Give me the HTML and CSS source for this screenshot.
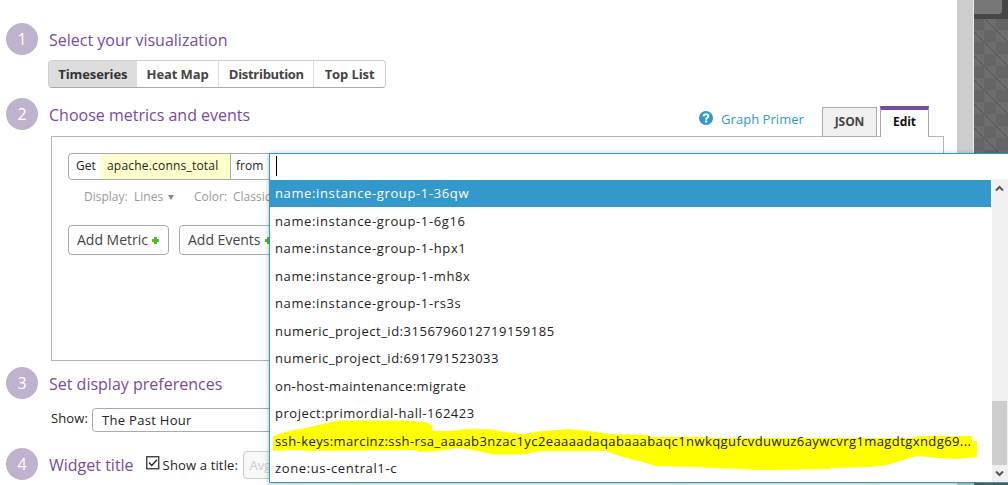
FILE: index.html
```html
<!DOCTYPE html>
<html lang="en">
<head>
<meta charset="utf-8">
<title>Graph editor</title>
<link rel="stylesheet" href="styles.css">
</head>
<body>
<div class="screen">
  <main class="panel">
    <section class="step step-visualization">
      <div class="step-head"><span class="num">1</span><h2>Select your visualization</h2></div>
      <div class="segments">
        <span class="segment active">Timeseries</span>
        <span class="segment heat">Heat Map</span>
        <span class="segment dist">Distribution</span>
        <span class="segment top">Top List</span>
      </div>
    </section>
    <section class="step step-metrics">
      <div class="step-head">
        <span class="num">2</span><h2>Choose metrics and events</h2>
        <div class="head-tools">
          <a class="primer"><svg width="14" height="14" viewBox="0 0 14 14"><circle cx="7" cy="7" r="7" fill="#3399cc"/><path d="M4.6 5.400C4.700 3.900 5.700 3.300 7 3.300c1.400 0 2.300.8 2.300 1.900C9.300 6.800 7.200 6.700 7.100 8.600" fill="none" stroke="#fff" stroke-width="2"/><rect x="6" y="9.500" width="2.200" height="2" fill="#fff"/></svg><span>Graph Primer</span></a>
          <span class="tab json">JSON</span><span class="tab edit">Edit</span>
        </div>
      </div>
      <div class="editor">
        <div class="query"><span class="get">Get</span><span class="metric">apache.conns_total</span><span class="from">from</span></div>
        <div class="options"><span class="opt-display">Display:</span><span class="opt-lines">Lines</span><i class="caret"></i><span class="opt-color">Color:</span><span>Classic</span></div>
        <div class="adders">
          <span class="adder">Add Metric<i class="plus"></i></span>
          <span class="adder">Add Events<i class="plus"></i></span>
        </div>
      </div>
    </section>
    <section class="step step-display">
      <div class="step-head"><span class="num">3</span><h2>Set display preferences</h2></div>
      <div class="show-row"><span class="show-label">Show:</span><span class="select">The Past Hour</span></div>
    </section>
    <section class="step step-title">
      <div class="step-head"><span class="num">4</span><h2>Widget title</h2>
        <svg class="check" width="14" height="14" viewBox="0 0 14 14"><rect x=".75" y=".75" width="12" height="12" fill="#fff" stroke="#333" stroke-width="1.3"/><path d="M3 6.500l2.700 3L11 3.700" fill="none" stroke="#222" stroke-width="1.300"/></svg>
        <span class="title-label">Show a title:</span><span class="title-input">Avg</span>
      </div>
    </section>
  </main>
  <div class="page-scroll"></div>
  <aside class="backdrop">
    <svg width="34" height="485">
      <defs><pattern id="weave" x="-2" y="6" width="24" height="24" patternUnits="userSpaceOnUse">
        <rect width="24" height="24" fill="#6d6d6d"/><path d="M12 0h12v12H12zM0 12h12v12H0z" fill="#656565"/>
        <path d="M2 2L24 24M0 0L2 2" stroke="#434343" stroke-dasharray="1 .7"/>
      </pattern></defs>
      <rect width="34" height="485" fill="url(#weave)"/>
      <rect width="34" height="19" fill="#474747"/><path d="M0 0h28v12l-2 2H0z" fill="#777"/>
    </svg>
  </aside>
</div>
<div class="dropdown">
  <div class="search"><i class="cursor"></i></div>
  <div class="results">
    <ul class="list">
      <li class="selected">name:instance-group-1-36qw</li>
      <li>name:instance-group-1-6g16</li>
      <li>name:instance-group-1-hpx1</li>
      <li>name:instance-group-1-mh8x</li>
      <li>name:instance-group-1-rs3s</li>
      <li class="medium">numeric_project_id:3156796012719159185</li>
      <li class="medium">numeric_project_id:691791523033</li>
      <li class="tight">on-host-maintenance:migrate</li>
      <li class="medium">project:primordial-hall-162423</li>
      <li class="tight">ssh-keys:marcinz:ssh-rsa_aaaab3nzac1yc2eaaaadaqabaaabaqc1nwkqgufcvduwuz6aywcvrg1magdtgxndg69...</li>
      <li>zone:us-central1-c</li>
    </ul>
    <div class="scrollbar">
      <svg width="16" height="303" viewBox="0 0 16 303"><rect width="16" height="303" fill="#f0f0f0"/><rect y="222" width="15" height="64" fill="#cdcdcd"/><path d="M4 11.500l3.500-3.500 3.500 3.500M4 292.500l3.500 3.500 3.500-3.500" fill="none" stroke="#555" stroke-width="2"/></svg>
    </div>
  </div>
  <svg class="marker" width="738" height="329" viewBox="270 154 738 329"><path fill="#ff0" d="M273 436L285 432L310 427L338 420.500L403 420.500L425 422L432 425L432 431L450 431L467 429L487 429L507 432L523 434L543 431L570 429L588 431L610 434L648 435L650 437L698 437L720 438L910 438L920 436L972 436L972 441L977 441L977 457L957 459L940 458L917 456L903 460L887 465L870 467L832 468L830 469L758 470L740 469L713 468L693 467L655 466L643 462L630 459L613 454L607 451L540 451L523 454.500L493 454.500L473 450L458 448L437 451L418 452L417 450L310 451L290 450L273 451Z"/></svg>
</div>
</body>
</html>
```
FILE: styles.css
```css
* { box-sizing: border-box; }
body { margin: 0; overflow: hidden; background: #fff; font-family: "Open Sans", "Noto Sans", sans-serif; font-size: 13px; color: #222; }
.screen { display: flex; width: 1008px; height: 485px; overflow: hidden; }
.panel { width: 957px; flex: none; padding-top: 23px; }
.page-scroll { width: 17px; background: #cdcdcd; border-right: 1px solid #eee; }
.backdrop { width: 34px; flex: none; }
.backdrop svg, .scrollbar svg { display: block; }

.step { padding-left: 6px; }
.step-head { display: flex; height: 32px; position: relative; white-space: nowrap; }
.num { width: 32px; height: 32px; border-radius: 50%; background: #bfb2cc; color: #fff; font-size: 16px; line-height: 33px; text-align: center; }
h2 { margin: 0 0 0 11px; font-size: 16px; font-weight: 400; line-height: 34px; color: #774aa4; }
.step-visualization { height: 75px; }
.step-metrics { height: 269px; }
.step-display { height: 81px; }

.segments { display: flex; width: 338px; height: 28px; margin: 5px 0 0 42px; border: 1px solid #d0d0d0; border-bottom-color: #aaa; border-radius: 4px; overflow: hidden; font-weight: 700; color: #444; line-height: 27px; text-align: center; }
.segment { width: 71px; letter-spacing: -.1px; }
.segment.active { width: 88px; background: #ddd; color: #333; }
.segment.heat { width: 83px; border-right: 1px solid #ddd; }
.segment.dist { width: 95px; border-right: 1px solid #ddd; letter-spacing: -.3px; }

.head-tools { display: flex; margin-left: auto; padding-top: 8px; height: 40px; }
.primer { display: flex; gap: 8px; margin-right: 18px; padding-top: 5px; color: #3399cc; line-height: 17px; letter-spacing: .05px; }
.tab { font-weight: 700; text-align: center; font-size: 12px; letter-spacing: -.1px; }
.json { width: 55px; height: 30px; margin: 1px 3px 0 0; border: 1px solid #aaa; background: #f0f0f0; color: #444; line-height: 28px; }
.edit { width: 49px; height: 31px; margin-right: 28px; border: 1px solid #aaa; border-top: 4px solid #774aa4; border-bottom: 0; background: #fff; color: #111; line-height: 24px; z-index: 1; }
.editor { width: 893px; height: 225px; margin: 6px 0 0 45px; padding: 16px; border: 1px solid #b5b5b5; }
.query { display: flex; width: 260px; height: 27px; border: 1px solid #aaa; border-radius: 4px 0 0 4px; font-size: 12px; line-height: 24px; white-space: nowrap; overflow: hidden; }
.get { width: 32px; padding-left: 7px; }
.metric { width: 130px; padding-left: 6px; background: #ffffcc; border-right: 1px solid #aaa; letter-spacing: .2px; }
.from { padding-left: 5px; }
.options { display: flex; height: 18px; margin: 8px 0 0 16px; color: #999; font-size: 12px; line-height: 18px; white-space: nowrap; }
.opt-display { width: 50px; }
.opt-lines { width: 34px; }
.caret { width: 6px; height: 5px; margin: 7px 20px 0 0; background: #888; clip-path: polygon(0 0, 100% 0, 50% 100%); }
.opt-color { width: 39px; }
.adders { display: flex; gap: 10px; margin-top: 19px; }
.adder { display: flex; width: 101px; height: 30px; padding-left: 8px; border: 1px solid #aaa; border-radius: 4px; font-size: 14px; line-height: 28px; color: #444; white-space: nowrap; }
.plus { width: 7px; height: 7px; margin: 11px 0 0 4px; background: linear-gradient(#5b2, #5b2) center / 3px 7px no-repeat, linear-gradient(#5b2, #5b2) center / 7px 3px no-repeat; }

.show-row { display: flex; height: 24px; margin: 9px 0 0 45px; }
.show-label { width: 41px; line-height: 21px; letter-spacing: .1px; }
.select { width: 250px; border: 1px solid #aaa; border-radius: 4px; padding-left: 9px; line-height: 22px; letter-spacing: .3px; }
.check { margin: 8px 0 0 12px; }
.title-label { margin: 0 0 0 3px; width: 80px; line-height: 35px; letter-spacing: .15px; }
.title-input { width: 200px; height: 28px; margin-top: 3px; padding-left: 6px; border: 1px solid #ccc; border-radius: 4px; background: #f8f8f8; color: #ccc; line-height: 27px; }

.dropdown { position: absolute; left: 269px; top: 153px; width: 740px; height: 330px; background: #fff; border: 1px solid #3399cc; border-right: 0; box-shadow: 0 1px 5px rgba(0, 0, 0, .3); }
.search { height: 25px; padding: 2px 0 0 6px; }
.cursor { display: block; width: 1px; height: 20px; background: #000; }
.results { display: flex; }
.list { width: 722px; margin: 0; padding: 1px 1px 0 0; list-style: none; position: relative; z-index: 1; }
.list li { height: 27.5px; padding-left: 5px; line-height: 27px; letter-spacing: .63px; white-space: nowrap; }
.list .medium { letter-spacing: .52px; }
.list .tight { letter-spacing: .41px; }
.list .selected { height: 27px; margin-bottom: .5px; background: #3399cc; color: #fff; }
.marker { position: absolute; left: 0; top: 0; }
```
